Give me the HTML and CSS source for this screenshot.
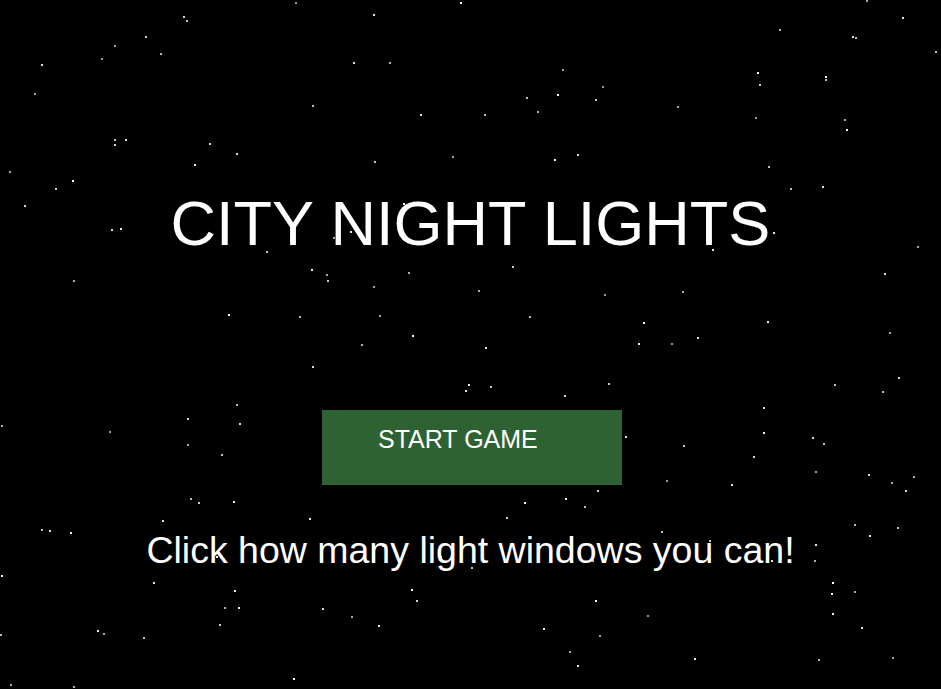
FILE: index.html
```html
<!DOCTYPE html>
<html lang="en">
  <head>
    <meta charset="UTF-8" />
    <meta name="viewport" content="width=device-width, initial-scale=1.0" />
    <title>City Night Lights</title>
    <link rel="stylesheet" href="styles.css">
  </head>
  <body>
    <div id="sky" class="sky"></div>

    <main class="start-screen">
      <h1 class="title">CITY NIGHT LIGHTS</h1>
      <button class="start-btn" type="button">START GAME</button>
      <p class="hint">Click how many light windows you can!</p>
    </main>

    <script src="script.js"></script>
  </body>
</html>
```

FILE: styles.css
```css
html,
body {
  margin: 0;
  height: 100%;
}

body {
  font-family: "Liberation Sans", Arial, sans-serif;
  background: #000;
  color: #fff;
  overflow: hidden;
  position: relative;
}

/* star field */
.sky {
  position: absolute;
  inset: 0;
  z-index: 0;
}

.star {
  position: absolute;
  width: 2px;
  height: 2px;
  background: #fff;
}

.start-screen {
  position: relative;
  z-index: 1;
  display: flex;
  flex-direction: column;
  align-items: center;
  padding-top: 187px;
}

.title {
  font-size: 63px;
  font-weight: normal;
  line-height: 72px;
  margin: 0 0 151px;
}

.start-btn {
  width: 300px;
  height: 75px;
  margin-left: 3px;
  padding: 17px 0 0 56px;
  box-sizing: border-box;
  border: none;
  background: #2f6232;
  color: #fff;
  font-family: inherit;
  font-size: 25px;
  line-height: 25px;
  text-align: left;
  display: flex;
  align-items: flex-start;
  cursor: pointer;
}

.hint {
  font-size: 37.5px;
  line-height: 43px;
  margin: 44px 0 0;
}
```

FILE: script.js
```js
// scatter some stars over the sky
const sky = document.getElementById("sky");
let seed = 7;

function rand() {
  seed = (seed * 16807) % 2147483647;
  return (seed - 1) / 2147483646;
}

for (let i = 0; i < 180; i++) {
  const star = document.createElement("div");
  star.className = "star";
  star.style.left = Math.floor(rand() * 941) + "px";
  star.style.top = Math.floor(rand() * 689) + "px";
  star.style.opacity = (0.6 + rand() * 0.4).toFixed(2);
  sky.appendChild(star);
}
```
